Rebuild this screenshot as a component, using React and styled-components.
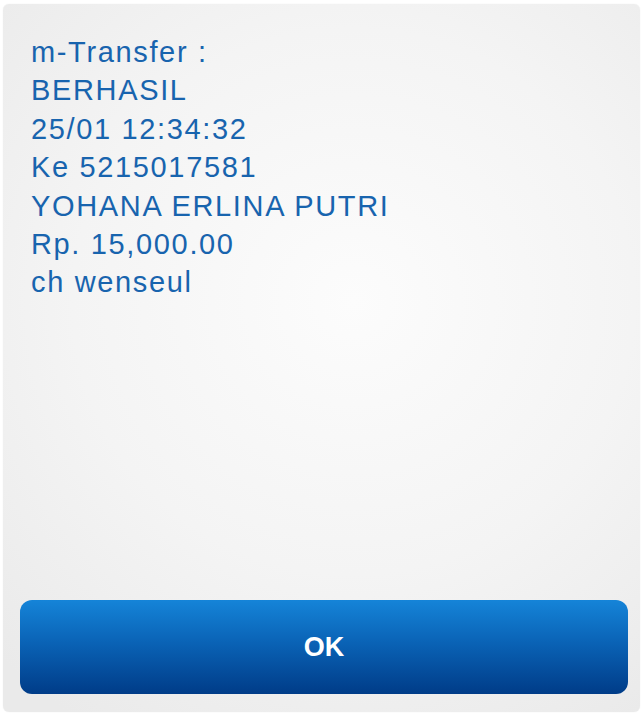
import React from "react";
import styled, { createGlobalStyle } from "styled-components";

const Global = createGlobalStyle`
  html, body { margin: 0; padding: 0; background: #ffffff; }
  body { font-family: "Liberation Sans", Arial, sans-serif; }
`;

const Page = styled.div`
  width: 644px;
  height: 713px;
  padding: 4px 4px 1px 3px;
  box-sizing: border-box;
  display: flex;
`;

const Card = styled.div`
  flex: 1;
  display: flex;
  flex-direction: column;
  box-sizing: border-box;
  padding: 29px 12px 18px 17px;
  border-radius: 6px;
  background: radial-gradient(ellipse 80% 70% at 55% 42%, #fcfcfc 0%, #f4f4f4 55%, #eaeaea 100%);
  box-shadow: 0 0 1px rgba(0, 0, 0, 0.12);
`;

const Message = styled.div`
  flex: 1;
  padding-left: 11px;
  color: #1864ae;
  font-size: 29px;
  line-height: 38.4px;
  letter-spacing: 1.65px;
`;

const Line = styled.div`
  white-space: nowrap;
`;

const OkButton = styled.button`
  height: 94px;
  border: none;
  border-radius: 12px;
  background: linear-gradient(to bottom, #1584d8 0%, #0a63b6 45%, #003c88 100%);
  color: #ffffff;
  font-family: "Liberation Sans", Arial, sans-serif;
  font-weight: bold;
  font-size: 27px;
  cursor: pointer;
  padding: 0;
`;

const lines = [
  "m-Transfer :",
  "BERHASIL",
  "25/01 12:34:32",
  "Ke 5215017581",
  "YOHANA ERLINA PUTRI",
  "Rp. 15,000.00",
  "ch wenseul",
];

export default function App() {
  return (
    <>
      <Global />
      <Page>
        <Card>
          <Message>
            {lines.map((l) => (
              <Line key={l}>{l}</Line>
            ))}
          </Message>
          <OkButton>OK</OkButton>
        </Card>
      </Page>
    </>
  );
}
